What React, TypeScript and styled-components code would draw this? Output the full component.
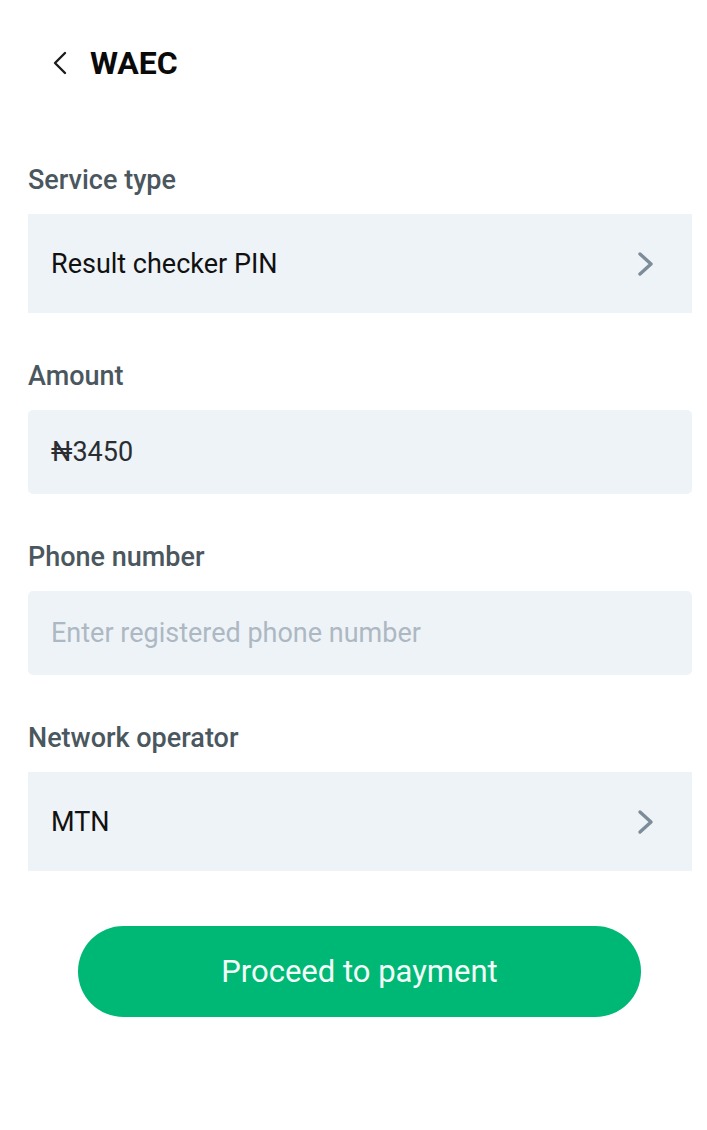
import { createGlobalStyle } from "styled-components";
import styled from "styled-components";

const GlobalStyle = createGlobalStyle`
  html, body {
    margin: 0;
    padding: 0;
    background: #ffffff;
  }
  body {
    font-family: Roboto, "Noto Sans", "Liberation Sans", sans-serif;
    -webkit-font-smoothing: antialiased;
  }
  * {
    box-sizing: border-box;
  }
`;

interface FieldProps {
  readonly label: string;
  readonly value?: string;
  readonly placeholder?: string;
  readonly select?: boolean;
}

function ChevronLeft() {
  return (
    <svg width="16" height="24" viewBox="0 0 16 24" fill="none">
      <path
        d="M13 2 L3 12 L13 22"
        stroke="#1c1c1c"
        strokeWidth="2.4"
        strokeLinecap="round"
        strokeLinejoin="round"
      />
    </svg>
  );
}

function ChevronRight() {
  return (
    <svg width="18" height="26" viewBox="0 0 18 26" fill="none">
      <path
        d="M3 3 L14 13 L3 23"
        stroke="#7d8c99"
        strokeWidth="3.4"
        strokeLinecap="round"
        strokeLinejoin="round"
      />
    </svg>
  );
}

function Field({ label, value, placeholder, select }: FieldProps) {
  return (
    <FieldWrap>
      <Label>{label}</Label>
      {select ? (
        <SelectBox>
          <Value>{value}</Value>
          <ChevronRight />
        </SelectBox>
      ) : (
        <InputBox>
          {value ? <Amount>{value}</Amount> : <Placeholder>{placeholder}</Placeholder>}
        </InputBox>
      )}
    </FieldWrap>
  );
}

export default function App() {
  return (
    <>
      <GlobalStyle />
      <Page>
        <Header>
          <BackButton>
            <ChevronLeft />
          </BackButton>
          <Title>WAEC</Title>
        </Header>
        <Form>
          <Field label="Service type" value="Result checker PIN" select />
          <Field label="Amount" value="₦3450" />
          <Field label="Phone number" placeholder="Enter registered phone number" />
          <Field label="Network operator" value="MTN" select />
        </Form>
        <Proceed>Proceed to payment</Proceed>
      </Page>
    </>
  );
}

const Page = styled.div`
  width: 707px;
  min-height: 1130px;
  padding: 30px 15px 0 28px;
  display: flex;
  flex-direction: column;
`;

const Header = styled.header`
  height: 66px;
  display: flex;
  align-items: center;
  gap: 22px;
  padding-left: 24px;
`;

const BackButton = styled.span`
  display: flex;
  align-items: center;
`;

const Title = styled.h1`
  margin: 0;
  font-size: 32px;
  font-weight: 700;
  color: #0a0a0a;
`;

const Form = styled.div`
  margin-top: 68px;
  display: flex;
  flex-direction: column;
  gap: 47px;
`;

const FieldWrap = styled.div`
  display: flex;
  flex-direction: column;
  gap: 18px;
`;

const Label = styled.label`
  font-size: 27px;
  line-height: 32px;
  font-weight: 500;
  color: #4b575e;
`;

const SelectBox = styled.div`
  height: 99px;
  background: #eef3f7;
  display: flex;
  align-items: center;
  justify-content: space-between;
  padding: 0 37px 0 23px;
`;

const InputBox = styled.div`
  height: 84px;
  background: #eef3f7;
  border-radius: 5px;
  display: flex;
  align-items: center;
  padding: 0 23px;
`;

const Value = styled.span`
  font-size: 27px;
  color: #111111;
`;

const Amount = styled.span`
  font-size: 27px;
  color: #2a2e33;
`;

const Placeholder = styled.span`
  font-size: 27px;
  color: #adb8c3;
`;

const Proceed = styled.button`
  margin: 55px 51px 0 50px;
  height: 91px;
  border: none;
  border-radius: 46px;
  background: #00b875;
  color: #f4fff9;
  font-family: Roboto, "Noto Sans", "Liberation Sans", sans-serif;
  font-size: 31px;
  font-weight: 400;
  cursor: pointer;
`;
